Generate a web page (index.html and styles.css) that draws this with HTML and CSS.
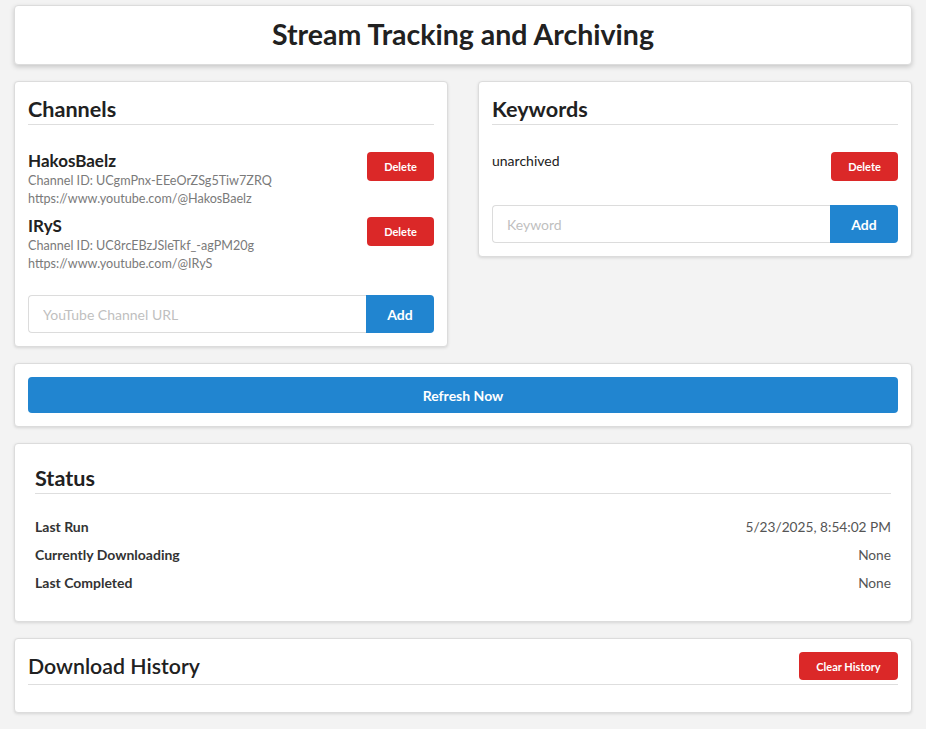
FILE: index.html
```html
<!DOCTYPE html>
<html>
<head>
<meta charset="utf-8">
<link rel="stylesheet" href="styles.css">
<title>Stream Tracking and Archiving</title>
</head>
<body>
<div class="page">
  <div class="card header-card">
    <h1 class="title">Stream Tracking and Archiving</h1>
  </div>

  <div class="two-col">
    <div class="card section-card">
      <h2 class="section-title">Channels</h2>
      <div class="channel-list">
        <div class="channel">
          <div class="channel-info">
            <div class="channel-name">HakosBaelz</div>
            <div class="channel-meta">Channel ID: UCgmPnx-EEeOrZSg5Tiw7ZRQ</div>
            <div class="channel-meta">https://www.youtube.com/@HakosBaelz</div>
          </div>
          <button class="btn btn-red btn-small">Delete</button>
        </div>
        <div class="channel">
          <div class="channel-info">
            <div class="channel-name">IRyS</div>
            <div class="channel-meta">Channel ID: UC8rcEBzJSleTkf_-agPM20g</div>
            <div class="channel-meta">https://www.youtube.com/@IRyS</div>
          </div>
          <button class="btn btn-red btn-small">Delete</button>
        </div>
      </div>
      <div class="input-row">
        <input class="text-input" type="text" placeholder="YouTube Channel URL">
        <button class="btn btn-blue btn-add">Add</button>
      </div>
    </div>

    <div class="card section-card">
      <h2 class="section-title">Keywords</h2>
      <div class="keyword-list">
        <div class="keyword">
          <span class="keyword-text">unarchived</span>
          <button class="btn btn-red btn-small">Delete</button>
        </div>
      </div>
      <div class="input-row">
        <input class="text-input" type="text" placeholder="Keyword">
        <button class="btn btn-blue btn-add">Add</button>
      </div>
    </div>
  </div>

  <div class="card">
    <button class="btn btn-blue btn-refresh">Refresh Now</button>
  </div>

  <div class="card status-card">
    <h2 class="section-title">Status</h2>
    <div class="status-rows">
      <div class="status-row"><span class="status-label">Last Run</span><span class="status-value">5/23/2025, 8:54:02 PM</span></div>
      <div class="status-row"><span class="status-label">Currently Downloading</span><span class="status-value">None</span></div>
      <div class="status-row"><span class="status-label">Last Completed</span><span class="status-value">None</span></div>
    </div>
  </div>

  <div class="card">
    <div class="history-head">
      <h2 class="history-title">Download History</h2>
      <button class="btn btn-red btn-clear">Clear History</button>
    </div>
    <div class="history-list"></div>
  </div>
</div>
</body>
</html>
```

FILE: styles.css
```css
* { box-sizing: border-box; }

html, body {
  margin: 0;
  padding: 0;
  background: #f3f3f3;
}

body {
  font-family: Lato, "Open Sans", "Liberation Sans", sans-serif;
  color: #212121;
}

.page {
  display: flex;
  flex-direction: column;
  gap: 16px;
  padding: 5px 14px 16px;
}

.card {
  background: #fff;
  border: 1px solid #dcdcdc;
  border-radius: 4px;
  box-shadow: 0 1px 3px rgba(0, 0, 0, 0.12);
  padding: 13px;
}

.header-card {
  padding: 11px 13px 13px;
  box-shadow: 0 2px 5px rgba(0, 0, 0, 0.18);
}

.title {
  margin: 0;
  text-align: center;
  font-size: 28.5px;
  line-height: 34px;
  font-weight: 700;
  color: #212121;
}

.two-col {
  display: grid;
  grid-template-columns: 1fr 1fr;
  gap: 30px;
  align-items: start;
}

.section-card {
  padding: 13px;
}

.section-title {
  margin: 0;
  font-size: 21.6px;
  line-height: 28px;
  font-weight: 700;
  padding-bottom: 1px;
  border-bottom: 1px solid #dedede;
  color: #212121;
}

.channel-list {
  margin-top: 25px;
  display: flex;
  flex-direction: column;
  gap: 7px;
  margin-bottom: 22px;
}

.channel {
  display: flex;
  justify-content: space-between;
  align-items: flex-start;
}

.channel-name {
  font-size: 17px;
  line-height: 22px;
  font-weight: 700;
  color: #212121;
}

.channel-meta {
  font-size: 12.6px;
  line-height: 18px;
  color: #7a7a7a;
}

.btn {
  font-family: Lato, "Open Sans", "Liberation Sans", sans-serif;
  border: none;
  color: #fff;
  font-weight: 700;
  cursor: pointer;
  border-radius: 4px;
}

.btn-red { background: #db2828; }
.btn-blue { background: #2185d0; }

.btn-small {
  width: 67px;
  height: 29px;
  font-size: 11px;
  margin-top: 2px;
  flex: none;
}

.input-row {
  display: flex;
  height: 38px;
}

.text-input {
  flex: 1;
  min-width: 0;
  height: 38px;
  border: 1px solid #dcdcdc;
  border-right: none;
  border-radius: 4px 0 0 4px;
  padding: 0 14px;
  font-family: Lato, "Open Sans", "Liberation Sans", sans-serif;
  font-size: 14px;
  color: #212121;
  outline: none;
}

.text-input::placeholder { color: #bfbfbf; }

.btn-add {
  width: 68px;
  height: 38px;
  font-size: 14px;
  border-radius: 0 4px 4px 0;
  flex: none;
}

.keyword-list {
  margin-top: 25px;
  margin-bottom: 24px;
}

.keyword {
  display: flex;
  justify-content: space-between;
  align-items: flex-start;
}

.keyword-text {
  font-size: 14px;
  line-height: 22px;
  color: #212121;
}

.btn-refresh {
  display: block;
  width: 100%;
  height: 36px;
  font-size: 14px;
}

.status-card {
  padding: 20px 20px 25px;
}

.status-rows {
  margin-top: 18px;
}

.status-row {
  display: flex;
  justify-content: space-between;
  align-items: center;
  height: 28px;
  font-size: 14px;
}

.status-label {
  font-weight: 700;
  color: #333;
}

.status-value {
  color: #555;
  font-size: 13.7px;
}

.history-head {
  display: flex;
  justify-content: space-between;
  align-items: center;
  padding-bottom: 4px;
  border-bottom: 1px solid #dedede;
}

.history-title {
  margin: 0;
  font-size: 21.3px;
  line-height: 28px;
  font-weight: 600;
  color: #212121;
}

.btn-clear {
  height: 28px;
  width: 99px;
  font-size: 11px;
}

.history-list {
  height: 14px;
}
```
